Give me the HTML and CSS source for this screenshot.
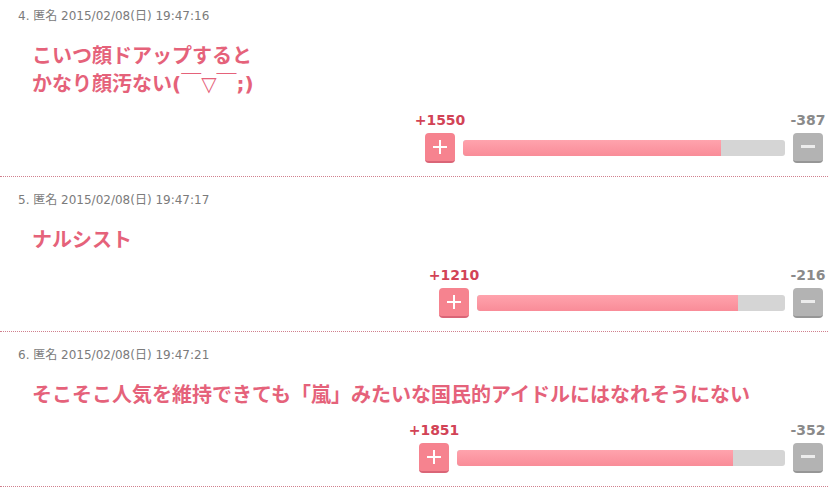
FILE: index.html
```html
<!DOCTYPE html>
<html>
  <head>
    <meta charset="utf-8">
    <title>コメント</title>
    <link rel="stylesheet" href="styles.css">
  </head>
  <body>
    <div class="comment">
      <div class="meta">4. 匿名 2015/02/08(日) 19:47:16</div>
      <div class="body">こいつ顔ドアップすると<br>かなり顔汚ない(￣▽￣;)</div>
      <div class="vote">
        <div class="count plus"><span>+1550</span></div>
        <div></div>
        <div class="count minus"><span>-387</span></div>
        <button class="btn plus"></button>
        <div class="meter" style="width:322px"><div class="fill" style="width:80%"></div></div>
        <button class="btn minus"></button>
      </div>
    </div>

    <div class="comment">
      <div class="meta">5. 匿名 2015/02/08(日) 19:47:17</div>
      <div class="body">ナルシスト</div>
      <div class="vote">
        <div class="count plus"><span>+1210</span></div>
        <div></div>
        <div class="count minus"><span>-216</span></div>
        <button class="btn plus"></button>
        <div class="meter" style="width:308px"><div class="fill" style="width:84.9%"></div></div>
        <button class="btn minus"></button>
      </div>
    </div>

    <div class="comment">
      <div class="meta">6. 匿名 2015/02/08(日) 19:47:21</div>
      <div class="body">そこそこ人気を維持できても「嵐」みたいな国民的アイドルにはなれそうにない</div>
      <div class="vote">
        <div class="count plus"><span>+1851</span></div>
        <div></div>
        <div class="count minus"><span>-352</span></div>
        <button class="btn plus"></button>
        <div class="meter" style="width:328px"><div class="fill" style="width:84%"></div></div>
        <button class="btn minus"></button>
      </div>
    </div>
  </body>
</html>
```

FILE: styles.css
```css
body {
  margin: 0;
  background: #fff;
  font-family: "DejaVu Sans", "Noto Sans CJK JP", sans-serif; }
.comment {
  border-bottom: 1px dotted #d0808e;
  padding: 14px 5px 13px 18px; }
.comment:first-child {
  padding-top: 7px; }
.meta {
  font-size: 12px;
  line-height: 18px;
  color: #7b7b7b; }
.body {
  margin-top: 17px;
  padding-left: 14px;
  font-size: 20px;
  line-height: 28px;
  font-weight: bold;
  color: #e5627a; }
.vote {
  display: grid;
  grid-template-columns: 30px auto 30px;
  justify-content: end;
  align-items: center;
  column-gap: 8px;
  row-gap: 4px;
  margin-top: 12px; }
.comment:first-child .vote {
  margin-top: 13px; }
.count {
  display: flex;
  justify-content: center;
  font-size: 14px;
  line-height: 18px;
  font-weight: bold;
  white-space: nowrap; }
.count.plus { color: #d24356; }
.count.minus { color: #8a8a8a; }
.btn {
  position: relative;
  width: 30px;
  height: 30px;
  padding: 0;
  border: 0;
  border-radius: 4px; }
.btn.plus {
  background: #f6838f;
  border-bottom: 2px solid #da6577; }
.btn.minus {
  background: #b3b3b3;
  border-bottom: 2px solid #969696; }
.btn::before, .btn::after {
  content: "";
  position: absolute;
  left: 8px;
  width: 14px;
  background: #fff; }
.btn.plus::before {
  top: 13px;
  height: 2px; }
.btn.plus::after {
  top: 7px;
  left: 14px;
  width: 2px;
  height: 14px; }
.btn.minus::before {
  top: 12px;
  height: 3px;
  background: #ececec; }
.btn.minus::after { display: none; }
.meter {
  height: 16px;
  border-radius: 3px;
  background: #d5d5d5;
  overflow: hidden; }
.fill {
  height: 100%;
  background: linear-gradient(#ffa3ad, #f98c98);
  border-radius: 3px 0 0 3px; }
```
